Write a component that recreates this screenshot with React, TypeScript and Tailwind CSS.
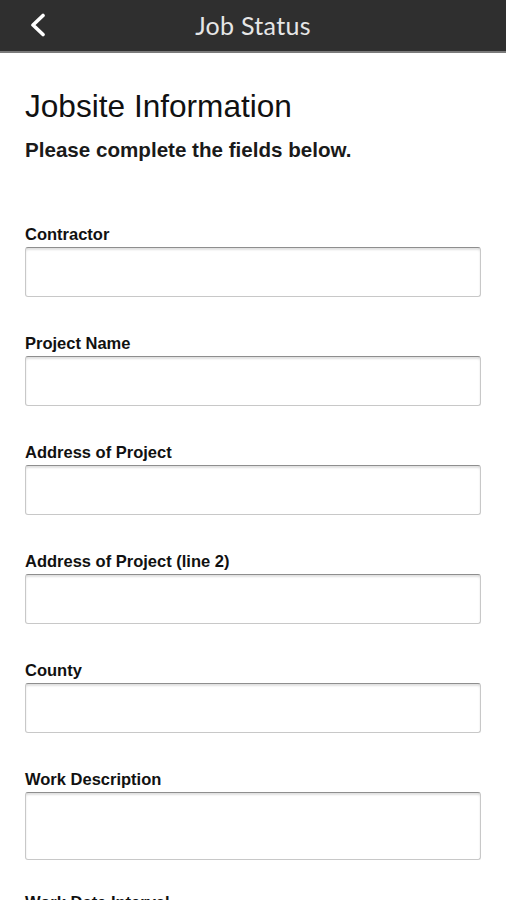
import React, { useState } from 'react';

const fields = [
  { name: 'contractor', label: 'Contractor' },
  { name: 'projectName', label: 'Project Name' },
  { name: 'address', label: 'Address of Project' },
  { name: 'address2', label: 'Address of Project (line 2)' },
  { name: 'county', label: 'County' },
];

export default function App() {
  const [formData, setFormData] = useState<Record<string, string>>({});

  const handleChange = (e) => {
    setFormData((prev) => ({
      ...prev,
      [e.target.name]: e.target.value,
    }));
  };

  return (
    <div className="h-[900px] overflow-hidden bg-white font-['Liberation_Sans',Arial,sans-serif] text-[#111]">
      <header className="relative flex h-[53px] items-center justify-center border-b-2 border-[#7a7a7a] bg-[#2f2f2f]">
        <button className="absolute left-[29px] top-[13px]">
          <svg width="18" height="24" viewBox="0 0 18 24" fill="none">
            <polyline points="14,2.5 4,12 14,21.5" stroke="white" strokeWidth="3.6" strokeLinecap="round" strokeLinejoin="round" />
          </svg>
        </button>
        <h1 className="font-['Lato',sans-serif] text-[25px] tracking-[0.3px] text-[#e6e6e6]">Job Status</h1>
      </header>

      <main className="px-[25px]">
        <h2 className="mt-[34px] text-[31.6px] leading-[38px]">Jobsite Information</h2>
        <p className="mt-[12px] text-[20.6px] font-bold leading-[25px] text-[#1a1a1a]">Please complete the fields below.</p>

        <form className="mt-[62px]">
          {fields.map((f) => (
            <div key={f.name} className="mb-[36px]">
              <label className="mb-[3px] block text-[16.5px] font-bold leading-[20px]">{f.label}</label>
              <input
                type="text"
                name={f.name}
                value={formData[f.name] || ''}
                onChange={handleChange}
                className="block h-[50px] w-full rounded-[3px] border border-[#c8c8c8] border-t-[#8e8e8e] px-2 shadow-[inset_0_2px_2px_rgba(0,0,0,0.12)] focus:outline-none"
              />
            </div>
          ))}
          <div className="mb-[32px]">
            <label className="mb-[3px] block text-[16.5px] font-bold leading-[20px]">Work Description</label>
            <textarea
              name="workDescription"
              value={formData.workDescription || ''}
              onChange={handleChange}
              className="block h-[68px] w-full resize-none rounded-[3px] border border-[#c8c8c8] border-t-[#8e8e8e] px-2 shadow-[inset_0_2px_2px_rgba(0,0,0,0.12)] focus:outline-none"
            />
          </div>
          <label className="block text-[16.5px] font-bold leading-[20px]">Work Date Interval</label>
        </form>
      </main>
    </div>
  );
}
